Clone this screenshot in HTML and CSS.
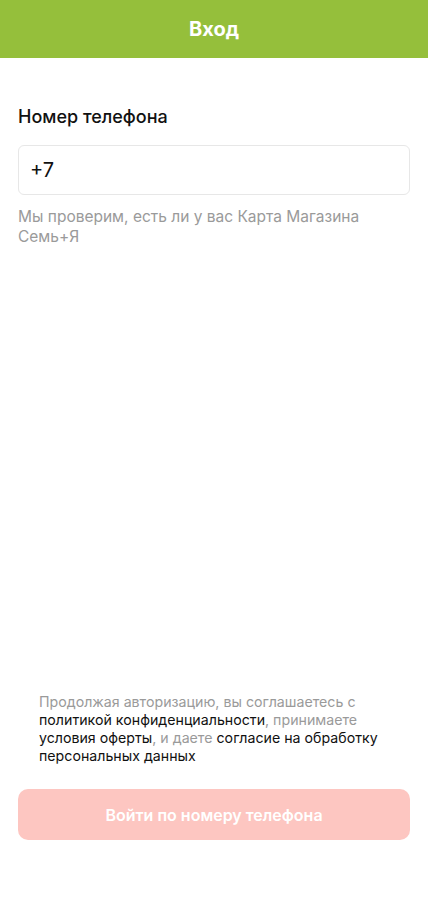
FILE: index.html
```html
<!DOCTYPE html>
<html lang="ru">
<head>
  <meta charset="UTF-8">
  <meta name="viewport" content="width=device-width, initial-scale=1.0">
  <title>Вход</title>
  <link rel="stylesheet" href="styles.css">
</head>
<body>
  <div class="page">
    <header class="topbar">
      <h1>Вход</h1>
    </header>

    <main class="form">
      <label class="label" for="phone">Номер телефона</label>
      <div class="field">
        <input id="phone" type="tel" value="+7">
      </div>
      <p class="hint">Мы проверим, есть ли у вас Карта Магазина<br>Семь+Я</p>
    </main>

    <footer class="bottom">
      <p class="terms">
        Продолжая авторизацию, вы соглашаетесь с<br>
        <a href="#">политикой конфиденциальности</a>, принимаете<br>
        <a href="#">условия оферты</a>, и даете
        <a href="#">согласие на обработку<br>персональных данных</a>
      </p>
      <button class="submit" type="button" disabled>Войти по номеру телефона</button>
    </footer>
  </div>
</body>
</html>
```

FILE: styles.css
```css
:root {
  --green: #95bf3b;
  --text: #111;
  --muted: #9a9a9a;
  --border: #e7e7e7;
  --btn-off: #fdc6c1;
}

* {
  box-sizing: border-box;
}

body {
  margin: 0;
  font-family: Inter, "Noto Sans", sans-serif;
  color: var(--text);
  background: #fff;
}

.page {
  min-height: 900px;
  display: flex;
  flex-direction: column;
}

.topbar {
  height: 58px;
  background: var(--green);
  display: flex;
  align-items: center;
  justify-content: center;
}

.topbar h1 {
  margin: 0;
  color: #fff;
  font-size: 20px;
  font-weight: 700;
}

.form {
  padding: 48px 18px 0;
  display: flex;
  flex-direction: column;
}

.label {
  font-size: 18px;
  font-weight: 500;
  line-height: 22px;
}

.field {
  margin-top: 17px;
  height: 50px;
  border: 1px solid var(--border);
  border-radius: 6px;
  display: flex;
  align-items: center;
  padding: 0 11px;
}

.field input {
  border: 0;
  outline: none;
  width: 100%;
  font: inherit;
  font-size: 20px;
  color: var(--text);
  background: transparent;
  padding: 0;
}

.hint {
  margin: 12px 0 0;
  font-size: 15.5px;
  line-height: 20px;
  color: var(--muted);
  white-space: nowrap;
}

.bottom {
  margin-top: auto;
  padding: 0 18px 60px;
}

.terms {
  margin: 0 0 24px;
  padding: 0 0 0 21px;
  font-size: 14.2px;
  line-height: 18px;
  color: var(--muted);
  white-space: nowrap;
}

.terms a {
  color: var(--text);
  text-decoration: none;
}

.submit {
  width: 100%;
  height: 51px;
  border: 0;
  border-radius: 10px;
  background: var(--btn-off);
  color: #fff;
  font: inherit;
  font-size: 16px;
  font-weight: 600;
}
```
